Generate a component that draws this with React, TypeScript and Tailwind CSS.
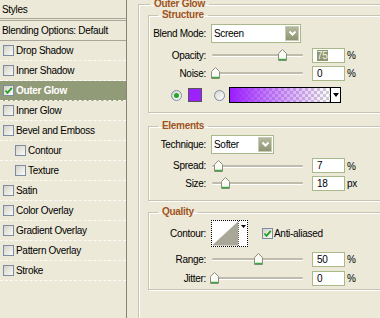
import React from "react";

const items: { label: string; indent?: boolean; checked?: boolean; active?: boolean }[] = [
  { label: "Drop Shadow" },
  { label: "Inner Shadow" },
  { label: "Outer Glow", checked: true, active: true },
  { label: "Inner Glow" },
  { label: "Bevel and Emboss" },
  { label: "Contour", indent: true },
  { label: "Texture", indent: true },
  { label: "Satin" },
  { label: "Color Overlay" },
  { label: "Gradient Overlay" },
  { label: "Pattern Overlay" },
  { label: "Stroke" },
];

function Check({ checked }: { checked?: boolean }) {
  return (
    <span className="flex h-[11px] w-[11px] shrink-0 items-center justify-center border border-[#7d8ca3] bg-[linear-gradient(135deg,#d3d2c8,#fbfbf8)]">
      {checked && (
        <svg width="9" height="9" viewBox="0 0 9 9">
          <path d="M1.5 4.5 L3.5 6.8 L7.8 1.8" stroke="#22a022" strokeWidth="1.8" fill="none" />
        </svg>
      )}
    </span>
  );
}

function Thumb() {
  return (
    <svg width="9" height="12" viewBox="0 0 9 12">
      <path d="M4.5 0.5 L8.5 4.5 L8.5 11.5 L0.5 11.5 L0.5 4.5 Z" fill="#fbfbf6" stroke="#8e8d82" />
      <path d="M1 10.5 H8" stroke="#3ea83e" strokeWidth="1.5" />
    </svg>
  );
}

function Slider({ offset }: { offset: number }) {
  return (
    <div className="relative h-[12px] w-[92px] shrink-0">
      <div className="absolute left-[1px] right-0 top-[5px] h-[2px] rounded-full bg-[#bfbcad] shadow-[0_1px_0_#fff]" />
      <div className="absolute top-0" style={{ left: offset }}>
        <Thumb />
      </div>
    </div>
  );
}

function NumBox({ value, unit, selected }: { value: string; unit: string; selected?: boolean }) {
  return (
    <>
      <div className="ml-[9px] flex h-[15px] w-[33px] shrink-0 items-center border border-[#a9b98a] bg-white pl-[4px]">
        {selected ? <span className="bg-[#8e9873] leading-[11px] text-[#f4f4ea]">{value}</span> : <span>{value}</span>}
      </div>
      <span className="ml-[2px] self-start pt-[1px]">{unit}</span>
    </>
  );
}

function Select({ value, width }: { value: string; width: string }) {
  return (
    <div className={`flex h-[19px] ${width} shrink-0 items-center justify-between border border-[#a9b98a] bg-white pl-[2px] pr-[1px]`}>
      <span>{value}</span>
      <span className="flex h-[15px] w-[14px] items-center justify-center border border-[#c8ccb6] bg-[linear-gradient(#b3b89b,#8e9572)]">
        <svg width="9" height="7" viewBox="0 0 9 7">
          <path d="M1.5 1.5 L4.5 4.5 L7.5 1.5" stroke="#fff" strokeWidth="2" fill="none" />
        </svg>
      </span>
    </div>
  );
}

function Row({ label, h, children }: { label: string; h: string; children?: React.ReactNode }) {
  return (
    <div className={`flex ${h} items-center`}>
      <span className="w-[57px] shrink-0 text-right">{label}</span>
      <div className="ml-[5px] flex items-center">{children}</div>
    </div>
  );
}

function Group({ title, cls, children }: { title: string; cls: string; children: React.ReactNode }) {
  return (
    <fieldset className={`w-[240px] border border-[#c7c4b4] shadow-[inset_1px_1px_0_#fff,1px_1px_0_#fff] ${cls}`}>
      <legend className="ml-[9px] px-[4px] font-bold leading-[10px] text-[#a0531c]">{title}</legend>
      {children}
    </fieldset>
  );
}

function Radio({ on }: { on?: boolean }) {
  return (
    <span className="flex h-[11px] w-[11px] shrink-0 items-center justify-center rounded-full border border-[#7d8ca3] bg-[linear-gradient(135deg,#d6d5cc,#fff)]">
      {on && <span className="h-[5px] w-[5px] rounded-full bg-[#2aa52a]" />}
    </span>
  );
}

export default function App() {
  return (
    <div className="flex h-[318px] w-[380px] overflow-hidden bg-[#ece9d8] font-['Liberation_Sans',Arial,sans-serif] text-[10px] tracking-[-0.3px] text-black">
      <aside className="w-[127px] shrink-0 border-r border-[#85837a]">
        <div className="flex h-[19px] items-center border-b border-[#a8a698] pl-[2px]">Styles</div>
        <div className="mt-[1px] flex h-[21px] items-center border-y border-[#a8a698] pl-[2px]">Blending Options: Default</div>
        {items.map((it) => (
          <div
            key={it.label}
            className={`flex h-[20px] items-center border-b border-dashed border-[#fbfaf4] ${it.indent ? "pl-[15px]" : "pl-[3px]"} ${it.active ? "bg-[#929b77] font-bold text-white" : ""}`}
          >
            <Check checked={it.checked} />
            <span className="ml-[2px]">{it.label}</span>
          </div>
        ))}
      </aside>

      <div className="pl-[11px]">
        <fieldset className="mt-[-1px] h-[340px] w-[270px] border border-[#c7c4b4] shadow-[inset_1px_1px_0_#fff,1px_1px_0_#fff]">
          <legend className="ml-[11px] px-[4px] font-bold leading-[10px] text-[#a0531c]">Outer Glow</legend>
          <div className="pl-[9px]">
            <Group title="Structure" cls="mt-[1px] pb-[5px]">
              <Row label="Blend Mode:" h="h-[27px]">
                <Select value="Screen" width="w-[90px]" />
              </Row>
              <Row label="Opacity:" h="h-[16px]">
                <Slider offset={67} />
                <NumBox value="75" unit="%" selected />
              </Row>
              <Row label="Noise:" h="h-[20px]">
                <Slider offset={0} />
                <NumBox value="0" unit="%" />
              </Row>
              <div className="flex h-[24px] items-center pl-[22px]">
                <Radio on />
                <span className="ml-[6px] h-[14px] w-[14px] border border-[#555] bg-[#9b22ff]" />
                <span className="ml-[12px]">
                  <Radio />
                </span>
                <div className="ml-[4px] flex h-[16px] border border-black">
                  <div className="h-full w-[101px] border-r border-black bg-[linear-gradient(to_right,#9b1cff,rgba(155,28,255,0.55)_40%,rgba(155,28,255,0)),repeating-conic-gradient(#cfcfcf_0%_25%,#fff_0%_50%)] bg-[length:100%_100%,6px_6px]" />
                  <div className="flex w-[9px] items-center justify-center bg-white">
                    <svg width="6" height="4" viewBox="0 0 6 4">
                      <path d="M0 0 H6 L3 4 Z" fill="#000" />
                    </svg>
                  </div>
                </div>
              </div>
            </Group>

            <Group title="Elements" cls="mt-[8px] pb-[7px]">
              <Row label="Technique:" h="h-[27px]">
                <Select value="Softer" width="w-[63px]" />
              </Row>
              <Row label="Spread:" h="h-[15px]">
                <Slider offset={3} />
                <NumBox value="7" unit="%" />
              </Row>
              <Row label="Size:" h="h-[20px]">
                <Slider offset={10} />
                <NumBox value="18" unit="px" />
              </Row>
            </Group>

            <Group title="Quality" cls="mt-[6px] pb-[1px]">
              <Row label="Contour:" h="h-[33px]">
                <div className="flex h-[27px] w-[37px] border border-dotted border-black bg-white">
                  <svg width="27" height="25" viewBox="0 0 27 25" className="border-r border-dotted border-[#555]">
                    <path d="M0 25 L27 0 L27 25 Z" fill="#a9a898" />
                  </svg>
                  <div className="flex flex-1 justify-center pt-[4px]">
                    <svg width="5" height="3" viewBox="0 0 5 3">
                      <path d="M0 0 H5 L2.5 3 Z" fill="#000" />
                    </svg>
                  </div>
                </div>
                <span className="ml-[14px]">
                  <Check checked />
                </span>
                <span className="ml-[1px]">Anti-aliased</span>
              </Row>
              <Row label="Range:" h="h-[18px]">
                <Slider offset={43} />
                <NumBox value="50" unit="%" />
              </Row>
              <Row label="Jitter:" h="h-[20px]">
                <Slider offset={-1} />
                <NumBox value="0" unit="%" />
              </Row>
            </Group>
          </div>
        </fieldset>
      </div>
    </div>
  );
}
